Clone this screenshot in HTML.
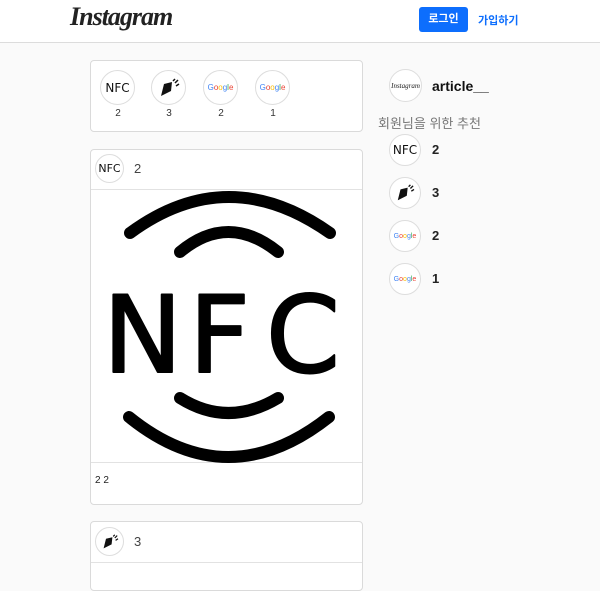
<!DOCTYPE html>
<html><head><meta charset="utf-8"><style>
*{box-sizing:border-box;margin:0;padding:0}
body{width:600px;height:577px;overflow:hidden;background:#fafafa;font-family:"Liberation Sans","Noto Sans CJK KR",sans-serif;position:relative;color:#222}
.hdr{position:absolute;left:0;top:0;width:600px;height:43px;background:#fff;border-bottom:1px solid #dcdcdc}
.logo{position:absolute;left:70px;top:2px;font-family:"Liberation Serif",serif;font-style:italic;font-weight:bold;font-size:26px;letter-spacing:-1px;color:#222}
.btn{position:absolute;left:419px;top:7px;width:49px;height:25px;background:#0d6efd;border-radius:3px;color:#fff;font-size:11px;font-weight:bold;text-align:center;line-height:25px}
.join{position:absolute;left:478px;top:12px;color:#0d6efd;font-size:11px;font-weight:bold}
.card{position:absolute;left:90px;width:273px;background:#fff;border:1px solid #dadada;border-radius:4px}
.av{position:absolute;border-radius:50%;border:1px solid #ddd;background:#fff;overflow:hidden;display:flex;align-items:center;justify-content:center}
.nfc{font-family:"DejaVu Sans",sans-serif;color:#111}
.g{font-size:8px;font-family:"Liberation Sans",sans-serif}
.lbl{position:absolute;font-size:10px;color:#333;width:20px;text-align:center}
.t{position:absolute;font-size:13px}
</style></head><body>
<div class="hdr"><div class="logo">Instagram</div><div class="btn">로그인</div><div class="join">가입하기</div></div>

<div class="card" style="top:60px;height:72px"></div>
<div class="av" style="left:100px;top:70px;width:35px;height:35px"><span class="nfc" style="font-size:12px">NFC</span></div>
<div class="av" style="left:151px;top:70px;width:35px;height:35px"><svg width="22" height="20" viewBox="0 0 22 20"><path d="M3 18 L6 6 L14 4 L13 13 Z" fill="#111"/><path d="M15 3l2-2M17 5l3-3M18 8l3-2" stroke="#111" stroke-width="1.5"/></svg></div>
<div class="av" style="left:203px;top:70px;width:35px;height:35px"><span class="g"><span style="color:#4285f4">G</span><span style="color:#ea4335">o</span><span style="color:#fbbc05">o</span><span style="color:#4285f4">g</span><span style="color:#34a853">l</span><span style="color:#ea4335">e</span></span></div>
<div class="av" style="left:255px;top:70px;width:35px;height:35px"><span class="g"><span style="color:#4285f4">G</span><span style="color:#ea4335">o</span><span style="color:#fbbc05">o</span><span style="color:#4285f4">g</span><span style="color:#34a853">l</span><span style="color:#ea4335">e</span></span></div>
<div class="lbl" style="left:108px;top:108px">2</div>
<div class="lbl" style="left:159px;top:108px">3</div>
<div class="lbl" style="left:211px;top:108px">2</div>
<div class="lbl" style="left:263px;top:108px">1</div>

<div class="card" style="top:149px;height:356px">
<div style="position:absolute;left:0;top:39px;width:271px;border-top:1px solid #e2e2e2"></div>
<div style="position:absolute;left:0;top:312px;width:271px;border-top:1px solid #e2e2e2"></div>
</div>
<div class="av" style="left:95px;top:154px;width:29px;height:29px"><span class="nfc" style="font-size:11px">NFC</span></div>
<div class="t" style="left:134px;top:161px;color:#444">2</div>
<svg style="position:absolute;left:0;top:0" width="600" height="577">
<g fill="none" stroke="#000" stroke-width="12" stroke-linecap="round">
<path d="M130 233 Q228 161 330 233"/>
<path d="M180 252 Q228 212 278 252"/>
<path d="M180 398 Q228 428 278 398"/>
<path d="M129 417 Q228 497 329 417"/>
</g>
<g font-family="DejaVu Sans,sans-serif" font-size="106" stroke="#000" stroke-width="2" stroke-linejoin="round">
<text x="103" y="372">N</text>
<text x="189" y="372">F</text>
<text x="266" y="372">C</text>
</g>
</svg>
<div style="position:absolute;left:95px;top:475px;font-size:10px;color:#222">2 2</div>

<div class="card" style="top:521px;height:70px">
<div style="position:absolute;left:0;top:40px;width:271px;border-top:1px solid #e2e2e2"></div>
</div>
<div class="av" style="left:95px;top:527px;width:29px;height:29px"><svg width="18" height="16" viewBox="0 0 22 20"><path d="M3 18 L6 6 L14 4 L13 13 Z" fill="#111"/><path d="M15 3l2-2M17 5l3-3M18 8l3-2" stroke="#111" stroke-width="1.5"/></svg></div>
<div class="t" style="left:134px;top:534px;color:#444">3</div>

<div class="av" style="left:389px;top:69px;width:33px;height:33px"><span style="font-family:'Liberation Serif',serif;font-style:italic;font-size:7px">Instagram</span></div>
<div class="t" style="left:432px;top:78px;font-weight:bold;font-size:14px;color:#111">article__</div>
<div class="t" style="left:378px;top:113px;color:#777;font-size:13px">회원님을 위한 추천</div>
<div class="av" style="left:389px;top:134px;width:32px;height:32px"><span class="nfc" style="font-size:12px">NFC</span></div>
<div class="t" style="left:432px;top:142px;font-weight:bold">2</div>
<div class="av" style="left:389px;top:177px;width:32px;height:32px"><svg width="20" height="18" viewBox="0 0 22 20"><path d="M3 18 L6 6 L14 4 L13 13 Z" fill="#111"/><path d="M15 3l2-2M17 5l3-3M18 8l3-2" stroke="#111" stroke-width="1.5"/></svg></div>
<div class="t" style="left:432px;top:185px;font-weight:bold">3</div>
<div class="av" style="left:389px;top:220px;width:32px;height:32px"><span class="g" style="font-size:7px"><span style="color:#4285f4">G</span><span style="color:#ea4335">o</span><span style="color:#fbbc05">o</span><span style="color:#4285f4">g</span><span style="color:#34a853">l</span><span style="color:#ea4335">e</span></span></div>
<div class="t" style="left:432px;top:228px;font-weight:bold">2</div>
<div class="av" style="left:389px;top:263px;width:32px;height:32px"><span class="g" style="font-size:7px"><span style="color:#4285f4">G</span><span style="color:#ea4335">o</span><span style="color:#fbbc05">o</span><span style="color:#4285f4">g</span><span style="color:#34a853">l</span><span style="color:#ea4335">e</span></span></div>
<div class="t" style="left:432px;top:271px;font-weight:bold">1</div>
</body></html>
